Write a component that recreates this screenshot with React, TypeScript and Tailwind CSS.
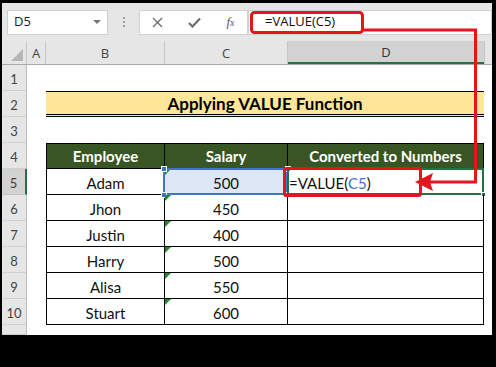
import React from "react";

const people = [
  { name: "Adam", salary: "500" },
  { name: "Jhon", salary: "450" },
  { name: "Justin", salary: "400" },
  { name: "Harry", salary: "500" },
  { name: "Alisa", salary: "550" },
  { name: "Stuart", salary: "600" },
];

const RowHead = ({ n, active }: { n: number | string; active?: boolean }) => (
  <div
    className={
      active
        ? "w-[25px] shrink-0 flex items-center justify-center pt-[5px] bg-[#d2d2d2] border-b border-[#c6c6c6] border-r-2 border-r-[#217346] text-[13px] text-[#3d3d3d]"
        : "w-[25px] shrink-0 flex items-center justify-center pt-[5px] bg-[#e6e6e6] border-b border-[#cfcfcf] border-r border-r-[#bdbdbd] text-[13px] text-[#444]"
    }
  >
    {n}
  </div>
);

const Triangle = () => (
  <div className="absolute top-0 left-0 w-0 h-0 border-t-[6px] border-r-[6px] border-t-[#1f8a2e] border-r-transparent"></div>
);

const App = () => {
  return (
    <div className="w-[496px] h-[367px] bg-black pt-[3px] pl-[2px] pr-[4px] font-['Lato','Open_Sans',sans-serif]">
      <div className="relative w-[490px] h-[332px] bg-white overflow-hidden">
        {/* formula bar */}
        <div className="h-[38px] bg-[#e6e6e6] flex items-center">
          <div className="ml-[5px] w-[101px] h-[25px] bg-white border border-[#d0d0d0] flex items-center justify-between pl-[6px] pr-[6px] font-['Open_Sans',sans-serif] text-[13px] text-[#222]">
            D5
            <div className="w-0 h-0 border-l-[4px] border-r-[4px] border-t-[4px] border-l-transparent border-r-transparent border-t-[#777]"></div>
          </div>
          <div className="w-[31px] flex flex-col items-center gap-[2px]">
            <div className="w-[2px] h-[2px] bg-[#a0a0a0]"></div>
            <div className="w-[2px] h-[2px] bg-[#a0a0a0]"></div>
            <div className="w-[2px] h-[2px] bg-[#a0a0a0]"></div>
          </div>
          <div className="w-[109px] h-[25px] bg-white border border-[#d0d0d0] flex items-center justify-around text-[#777]">
            <svg width="11" height="11" viewBox="0 0 11 11">
              <path d="M1 1L10 10M10 1L1 10" stroke="#6f6f6f" strokeWidth="1.4" />
            </svg>
            <svg width="13" height="11" viewBox="0 0 13 11">
              <path d="M1 6L4.5 9.5L12 1.5" stroke="#6f6f6f" strokeWidth="2.2" fill="none" />
            </svg>
            <span className="font-['Liberation_Serif',serif] italic text-[13px] text-[#555]">
              f<span className="text-[10px]">x</span>
            </span>
          </div>
          <div className="flex-1 h-[25px] bg-white border border-[#d0d0d0] flex items-center pl-[16px] font-['Open_Sans',sans-serif] text-[13px] text-[#111]">
            =VALUE(C5)
          </div>
        </div>

        {/* column headers */}
        <div className="h-[24px] flex bg-[#e6e6e6] border-b border-[#ababab] text-[13px] text-[#444] font-['Open_Sans',sans-serif]">
          <div className="w-[25px] shrink-0 flex items-end justify-end pr-[3px] pb-[3px] border-r border-[#c6c6c6]">
            <svg width="12" height="12" viewBox="0 0 12 12">
              <path d="M12 0L12 12L0 12Z" fill="#b5b5b5" />
            </svg>
          </div>
          <div className="w-[19px] shrink-0 flex items-center justify-center pt-[2px] border-r border-[#c6c6c6]">A</div>
          <div className="w-[119px] shrink-0 flex items-center justify-center pt-[2px] border-r border-[#c6c6c6]">B</div>
          <div className="w-[123px] shrink-0 flex items-center justify-center pt-[2px] border-r border-[#c6c6c6]">C</div>
          <div className="w-[196px] shrink-0 flex items-center justify-center pt-[2px] bg-[#d2d2d2] border-b-2 border-[#217346] text-[#333]">D</div>
          <div className="flex-1 border-l border-[#c6c6c6]"></div>
        </div>

        {/* row 1 */}
        <div className="h-[26px] flex">
          <RowHead n={1} />
        </div>

        {/* row 2 title */}
        <div className="h-[26px] flex">
          <RowHead n={2} />
          <div className="w-[19px] shrink-0"></div>
          <div className="w-[438px] shrink-0 bg-[#ffe699] border-t border-black border-b-[3px] border-double flex items-center justify-center pt-[1px] text-[17px] font-bold text-black">
            Applying VALUE Function
          </div>
        </div>

        {/* row 3 */}
        <div className="h-[26px] flex">
          <RowHead n={3} />
        </div>

        {/* row 4 header */}
        <div className="h-[26px] flex">
          <RowHead n={4} />
          <div className="w-[19px] shrink-0"></div>
          <div className="w-[119px] shrink-0 bg-[#375623] border border-black flex items-center justify-center pt-[1px] text-white font-bold text-[15px]">Employee</div>
          <div className="w-[123px] shrink-0 bg-[#375623] border-y border-r border-black flex items-center justify-center pt-[1px] text-white font-bold text-[15px]">Salary</div>
          <div className="w-[196px] shrink-0 bg-[#375623] border-y border-r border-black flex items-center justify-center pt-[1px] text-white font-bold text-[15px]">Converted to Numbers</div>
        </div>

        {/* data rows */}
        {people.map((p, i) => (
          <div key={p.name} className="h-[26px] flex text-[15px] text-[#111]">
            <RowHead n={i + 5} active={i === 0} />
            <div className="w-[19px] shrink-0"></div>
            <div className="w-[119px] shrink-0 border-x border-b border-black flex items-center justify-center pt-[3px]">{p.name}</div>
            <div
              className={
                i === 0
                  ? "relative w-[123px] shrink-0 border-r border-b border-black bg-[#dde7f5] flex items-center justify-center pt-[3px]"
                  : "relative w-[123px] shrink-0 border-r border-b border-black flex items-center justify-center pt-[3px]"
              }
            >
              <Triangle />
              {p.salary}
              {i === 0 && (
                <>
                  <div className="absolute -left-[2px] -top-[1px] -right-[1px] -bottom-[1px] border-2 border-[#4472c4]"></div>
                  <div className="absolute -left-[4px] -top-[3px] w-[6px] h-[6px] bg-[#4472c4] border border-white"></div>
                  <div className="absolute -right-[4px] -top-[3px] w-[6px] h-[6px] bg-[#4472c4] border border-white"></div>
                  <div className="absolute -left-[4px] -bottom-[4px] w-[6px] h-[6px] bg-[#4472c4] border border-white"></div>
                  <div className="absolute -right-[4px] -bottom-[4px] w-[6px] h-[6px] bg-[#4472c4] border border-white"></div>
                </>
              )}
            </div>
            <div className="relative w-[196px] shrink-0 border-r border-b border-black flex items-center pl-[1px] pt-[3px]">
              {i === 0 && (
                <>
                  <span>
                    =VALUE(<span className="text-[#4472c4]">C5</span>)
                  </span>
                  <div className="absolute -left-[1px] -top-[1px] -right-[1px] -bottom-[1px] border-2 border-[#217346]"></div>
                  <div className="absolute -right-[3px] -bottom-[3px] w-[5px] h-[5px] bg-[#217346] border border-white"></div>
                </>
              )}
            </div>
          </div>
        ))}

        {/* row 11 (cut) */}
        <div className="h-[10px] flex">
          <RowHead n="" />
        </div>

        {/* red annotation */}
        <svg className="absolute left-0 top-0 pointer-events-none" width="490" height="332" viewBox="2 3 490 332">
          <rect x="251.5" y="12.5" width="111" height="20" rx="3" fill="none" stroke="#e8141b" strokeWidth="3" />
          <rect x="284.5" y="168.5" width="136" height="27" rx="2" fill="none" stroke="#e8141b" strokeWidth="3" />
          <polyline points="363,30 475.5,30 475.5,182 430,182" fill="none" stroke="#e8141b" strokeWidth="3" />
          <polygon points="415,182 433,173 430,182 433,191" fill="#e8141b" />
        </svg>
      </div>
    </div>
  );
};

export default App;
